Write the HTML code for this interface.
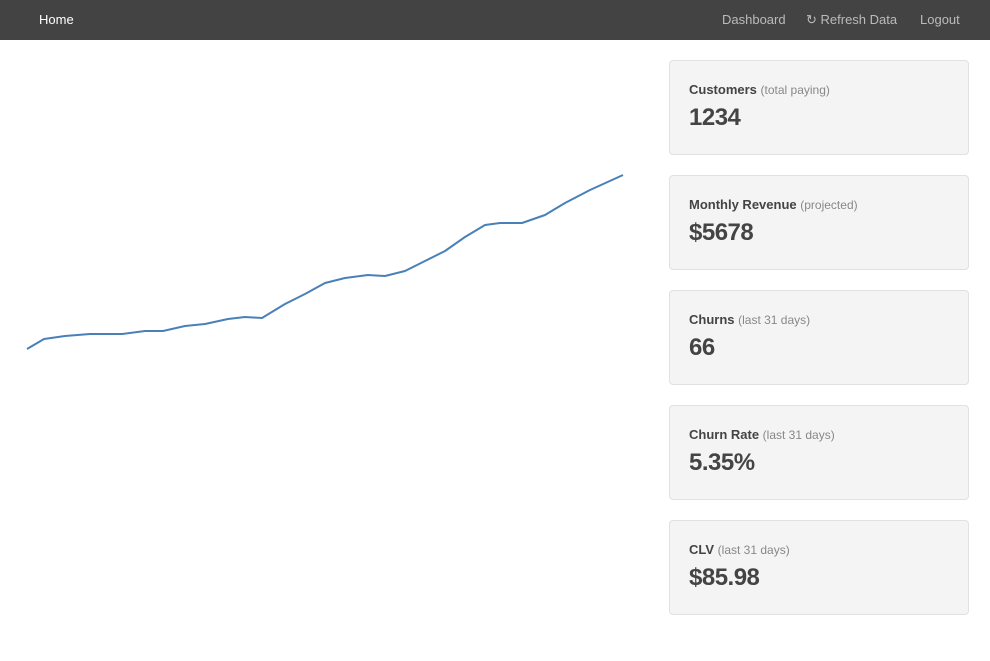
<!DOCTYPE html>
<html><head><style>
body{margin:0;width:990px;height:661px;background:#fff;font-family:"Liberation Sans",Arial,sans-serif;overflow:hidden;position:relative}
.nav{height:40px;background:#434343;position:relative;color:#bbb;font-size:13px}
.nav span{position:absolute;top:12px}
.card{position:absolute;left:669px;width:300px;height:95px;background:#f4f4f4;border:1px solid #e1e1e1;border-radius:4px;box-sizing:border-box;color:#444}
.card .l{position:absolute;left:19px;top:21px;font-size:13px;font-weight:bold}
.card .l small{font-weight:normal;font-size:12px;color:#888}
.card .v{position:absolute;left:19px;top:43px;font-size:24px;font-weight:bold;letter-spacing:-0.5px}
</style></head><body>
<div class="nav">
<span style="left:39px;color:#fff">Home</span>
<span style="left:722px">Dashboard</span>
<span style="left:806px">&#8635; Refresh Data</span>
<span style="left:920px">Logout</span>
</div>
<svg style="position:absolute;left:0;top:0" width="640" height="400"><polyline fill="none" stroke="#4a80b8" stroke-width="2" stroke-linejoin="round" points="27,349 44,339 65,336 90,334 122,334 145,331 163,331 185,326 205,324 228,319 245,317 262,318 285,304 305,294 325,283 345,278 368,275 385,276 405,271 425,261 445,251 465,237 485,225 500,223 522,223 545,215 565,203 590,190 623,175"/></svg>
<div class="card" style="top:60px"><div class="l">Customers <small>(total paying)</small></div><div class="v">1234</div></div>
<div class="card" style="top:175px"><div class="l">Monthly Revenue <small>(projected)</small></div><div class="v">$5678</div></div>
<div class="card" style="top:290px"><div class="l">Churns <small>(last 31 days)</small></div><div class="v">66</div></div>
<div class="card" style="top:405px"><div class="l">Churn Rate <small>(last 31 days)</small></div><div class="v">5.35%</div></div>
<div class="card" style="top:520px"><div class="l">CLV <small>(last 31 days)</small></div><div class="v">$85.98</div></div>
</body></html>
